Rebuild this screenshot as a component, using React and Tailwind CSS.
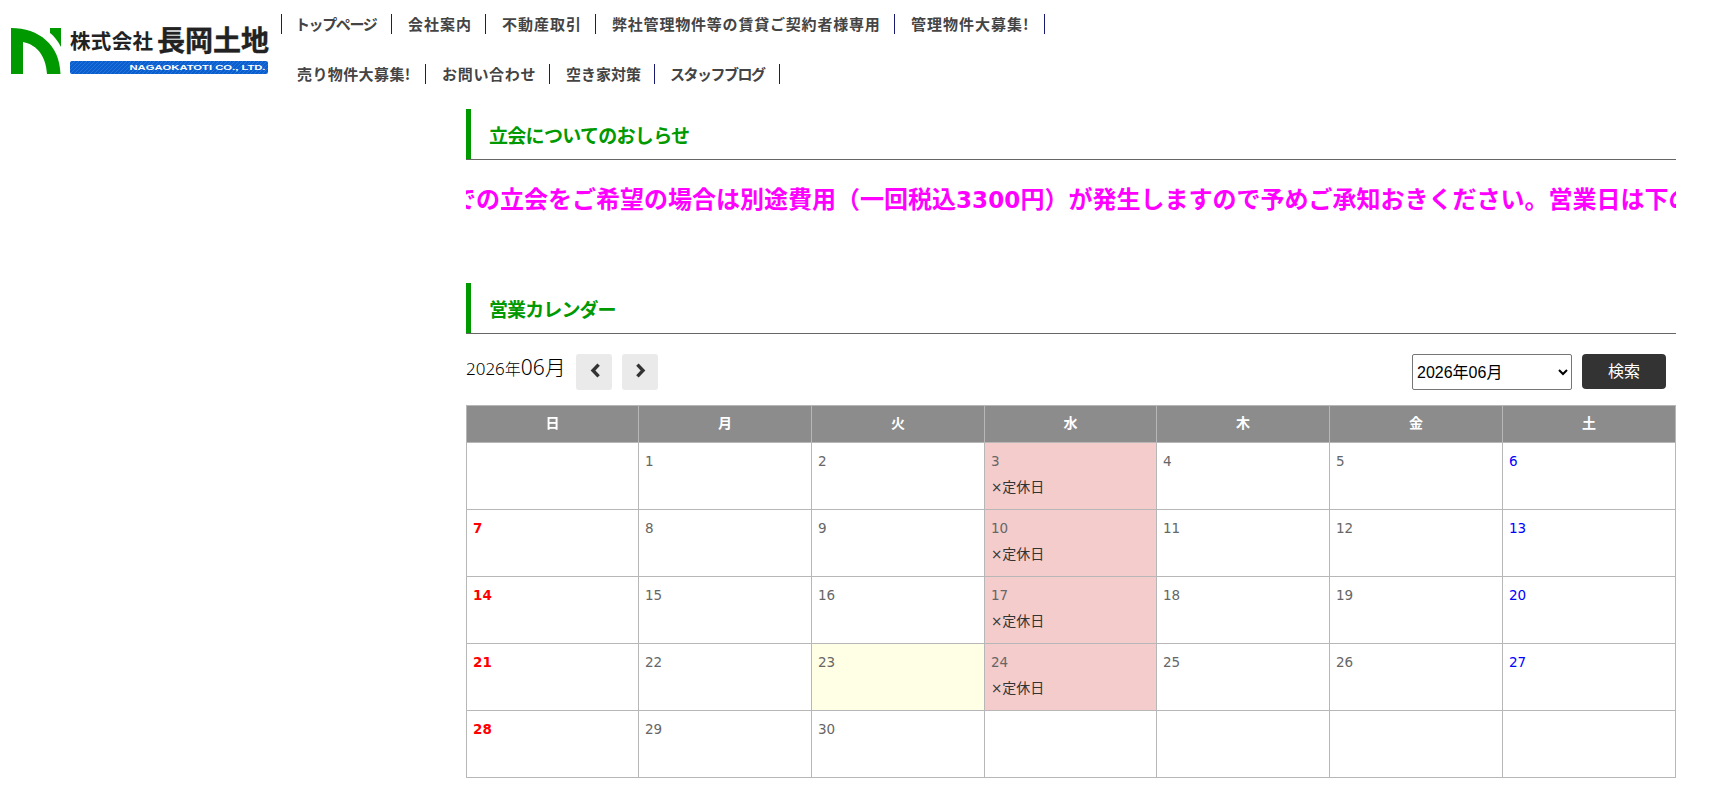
import React from "react";

const navRows = [
    [
        { label: "トップページ", width: "w-[111px]", tracking: "tracking-[-1.4px]", pad: "pl-[13px]" },
        { label: "会社案内", width: "w-[94px]", tracking: "tracking-[1px]", pad: "pl-[16px]" },
        { label: "不動産取引", width: "w-[110px]", tracking: "tracking-[1px]", pad: "pl-[16px]" },
        { label: "弊社管理物件等の賃貸ご契約者様専用", width: "w-[299px]", tracking: "tracking-[0.8px]", pad: "pl-[16px]" },
        { label: "管理物件大募集!", width: "w-[150px]", tracking: "tracking-[1px]", pad: "pl-[16px]" },
    ],
    [
        { label: "売り物件大募集!", width: "w-[145px]", tracking: "tracking-[0.4px]", pad: "pl-[16px]" },
        { label: "お問い合わせ", width: "w-[124px]", tracking: "tracking-[0.7px]", pad: "pl-[16px]" },
        { label: "空き家対策", width: "w-[105px]", tracking: "tracking-normal", pad: "pl-[16px]" },
        { label: "スタッフブログ", width: "w-[125px]", tracking: "tracking-[-1.5px]", pad: "pl-[15px]" },
    ],
];

const weekdays = ["日", "月", "火", "水", "木", "金", "土"];

const weeks = [
    [null, 1, 2, 3, 4, 5, 6],
    [7, 8, 9, 10, 11, 12, 13],
    [14, 15, 16, 17, 18, 19, 20],
    [21, 22, 23, 24, 25, 26, 27],
    [28, 29, 30, null, null, null, null],
];

const today = 23;

function Logo() {
    return (
        <svg width="281" height="80" viewBox="0 0 281 80" className="block shrink-0">
            <defs>
                <pattern id="stripes" width="4" height="4" patternUnits="userSpaceOnUse">
                    <rect width="4" height="4" fill="#0a5fd0" />
                    <path d="M-1 1L1 -1M0 4L4 0M3 5L5 3" stroke="#2f78d8" strokeWidth="0.8" />
                </pattern>
            </defs>
            <path d="M11 28C39 28 60 45 60.5 74H47C46 57 38 45 23 42V74H11Z" fill="#090" />
            <path d="M50 28H61V47C58 41 54 36 50 33Z" fill="#090" />
            <g fill="#222" className="font-['Noto_Sans_CJK_JP',sans-serif]">
                <text x="70" y="49" fontSize="20.5" fontWeight="700" textLength="83">株式会社</text>
                <text x="157" y="50.5" fontSize="28" fontWeight="700" stroke="#222" strokeWidth="0.4" textLength="112">長岡土地</text>
            </g>
            <rect x="70" y="61" width="198" height="13" rx="2" fill="url(#stripes)" />
            <text
                x="129.5"
                y="70"
                fontSize="7.6"
                fontWeight="700"
                fill="#fff"
                textLength="136"
                lengthAdjust="spacingAndGlyphs"
                className="font-['Liberation_Sans',sans-serif]"
            >
                NAGAOKATOTI CO., LTD.
            </text>
        </svg>
    );
}

function Nav() {
    return (
        <nav className="pt-[14px] text-[15px] font-bold text-[#444]">
            {navRows.map((row, i) => (
                <ul key={i} className="flex h-[50px]">
                    {row.map((item, j) => (
                        <li
                            key={item.label}
                            className={`${item.width} ${item.tracking} ${item.pad} ${i === 0 && j === 0 ? "border-l" : ""} h-5 shrink-0 border-r border-[#191970] leading-5 whitespace-nowrap`}
                        >
                            {item.label}
                        </li>
                    ))}
                </ul>
            ))}
        </nav>
    );
}

function SectionTitle({ children, tracking }) {
    return (
        <h2 className="border-b border-[#666]">
            <span className={`${tracking} block h-[50px] border-l-5 border-[#090] pl-[18px] text-[19px] leading-[51px] font-bold text-[#090]`}>
                {children}
            </span>
        </h2>
    );
}

function ArrowButton({ d, className }) {
    return (
        <button type="button" className={`${className} flex size-9 items-center justify-center rounded-[3px] bg-[#eaeaea] pb-[3px] pl-[2px]`}>
            <svg width="10" height="15" viewBox="0 0 10 15" fill="none" stroke="#333" strokeWidth="3.4">
                <path d={d} />
            </svg>
        </button>
    );
}

function dayColor(col) {
    if (col === 0) return "font-bold text-[#f00]";
    if (col === 6) return "text-[#00f]";
    return "text-[#666]";
}

function DayCell({ day, col }) {
    const closed = day && col === 3;
    const bg = closed ? "bg-[#f4cccc]" : day === today ? "bg-[#ffffe6]" : "bg-white";
    return (
        <td className={`${bg} h-[67px] border border-[#b7b7b7] px-[6px] pt-[6px] align-top`}>
            <div className={`${dayColor(col)} font-['DejaVu_Sans',sans-serif] text-[13.5px] leading-[25px]`}>{day}</div>
            {closed && (
                <div className="text-sm leading-6 text-[#333]">
                    <span className="font-['DejaVu_Sans',sans-serif] text-[13.5px]">×</span>定休日
                </div>
            )}
        </td>
    );
}

function Calendar() {
    return (
        <table className="mt-[15px] w-full table-fixed border-collapse">
            <colgroup>
                <col className="w-[172px]" />
                <col className="w-[173px]" />
                <col className="w-[173px]" />
                <col className="w-[172px]" />
                <col className="w-[173px]" />
                <col className="w-[173px]" />
                <col />
            </colgroup>
            <thead>
                <tr>
                    {weekdays.map((name) => (
                        <th key={name} className="h-[37px] border border-[#b7b7b7] bg-[#8c8c8c] pb-[4px] text-sm leading-5 font-bold text-white">
                            {name}
                        </th>
                    ))}
                </tr>
            </thead>
            <tbody>
                {weeks.map((week, i) => (
                    <tr key={i}>
                        {week.map((day, col) => (
                            <DayCell key={col} day={day} col={col} />
                        ))}
                    </tr>
                ))}
            </tbody>
        </table>
    );
}

export default function App() {
    return (
        <div className="h-[807px] w-[1718px] overflow-hidden bg-white font-['Noto_Sans_CJK_JP',sans-serif]">
            <header className="flex h-[109px]">
                <Logo />
                <Nav />
            </header>
            <main className="ml-[466px] w-[1210px]">
                <SectionTitle tracking="tracking-[-0.7px]">立会についてのおしらせ</SectionTitle>
                <div className="mt-5 h-9 overflow-hidden">
                    <p className="-ml-[14px] text-2xl leading-9 font-bold whitespace-nowrap text-[#f0f]">
                        での立会をご希望の場合は別途費用（一回税込
                        <span className="font-['DejaVu_Sans',sans-serif] text-[23px] tracking-[0.1px]">3300</span>
                        円）が発生しますので予めご承知おきください。営業日は下の
                    </p>
                </div>
                <div className="mt-[67px]">
                    <SectionTitle tracking="tracking-[-0.9px]">営業カレンダー</SectionTitle>
                </div>
                <div className="mt-5 flex h-9 justify-between">
                    <div className="flex">
                        <p className="w-[110px] text-[16px] leading-6 whitespace-nowrap text-black">
                            <span className="font-['Noto_Sans',sans-serif] text-[17px] font-light">2026</span>
                            <span className="font-light">年</span>
                            <span className="font-['Noto_Sans',sans-serif] text-[21px] font-light">06</span>
                            <span className="text-[21px] font-light">月</span>
                        </p>
                        <ArrowButton d="M8.6 1.6L3 7.5L8.6 13.4" />
                        <ArrowButton d="M1.4 1.6L7 7.5L1.4 13.4" className="ml-[10px]" />
                    </div>
                    <div className="mr-[10px] flex gap-[10px]">
                        <select className="h-9 w-[160px] rounded-[2px] border border-[#767676] bg-white font-['Liberation_Sans','Noto_Sans_CJK_JP',sans-serif] text-base text-black">
                            <option>2026年06月</option>
                        </select>
                        <button type="button" className="h-[35px] w-[84px] rounded-[4px] bg-[#333] pb-[4px] text-base text-white">
                            検索
                        </button>
                    </div>
                </div>
                <Calendar />
            </main>
        </div>
    );
}
